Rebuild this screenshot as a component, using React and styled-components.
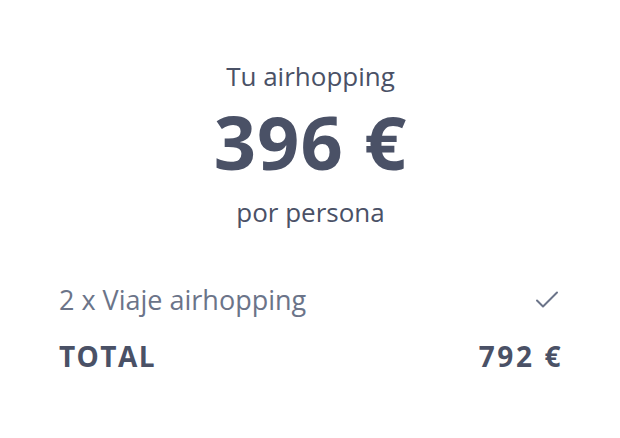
import React from 'react'
import styled, { createGlobalStyle } from 'styled-components'

const Global = createGlobalStyle`
  body {
    margin: 0;
    background: #fff;
    font-family: "Open Sans", "Noto Sans", sans-serif;
  }
`

const Card = styled.div`
  width: 620px;
  height: 438px;
  box-sizing: border-box;
  padding: 60px 58px 0 59px;
  display: flex;
  flex-direction: column;
`

const Header = styled.div`
  display: flex;
  flex-direction: column;
  align-items: center;
  color: #4a5166;
`

const Label = styled.div`
  font-size: 26px;
  line-height: 32px;
  margin-top: ${p => p.gap || 0}px;
`

const Price = styled.div`
  font-size: 74px;
  font-weight: 700;
  line-height: 80px;
  letter-spacing: 1px;
  margin-top: 10px;
`

const Summary = styled.div`
  margin-top: 56px;
  display: flex;
  flex-direction: column;
  gap: 24px;
`

const Row = styled.div`
  display: flex;
  justify-content: space-between;
  align-items: center;
  height: 32px;
  line-height: 32px;
  font-size: ${p => (p.total ? '28px' : '27px')};
  font-weight: ${p => (p.total ? 700 : 400)};
  letter-spacing: ${p => (p.total ? '1.4px' : '0')};
  color: ${p => (p.total ? '#4a5166' : '#6b7489')};
`

const Amount = styled.span`
  letter-spacing: 2.6px;
  margin-right: -1px;
`

const CheckIcon = styled.svg`
  margin-right: 3px;
`

const Check = () => (
  <CheckIcon width="24" height="18" viewBox="0 0 24 18" fill="none" stroke="#6b7489" strokeWidth="2" strokeLinecap="round" strokeLinejoin="round">
    <path d="M2 9.5 L8 15.5 L22 1.5" />
  </CheckIcon>
)

export default function App() {
  return (
    <Card>
      <Global />
      <Header>
        <Label>Tu airhopping</Label>
        <Price>396 €</Price>
        <Label gap={14}>por persona</Label>
      </Header>
      <Summary>
        <Row>
          <span>2 x Viaje airhopping</span>
          <Check />
        </Row>
        <Row total>
          <span>TOTAL</span>
          <Amount>792 €</Amount>
        </Row>
      </Summary>
    </Card>
  )
}
